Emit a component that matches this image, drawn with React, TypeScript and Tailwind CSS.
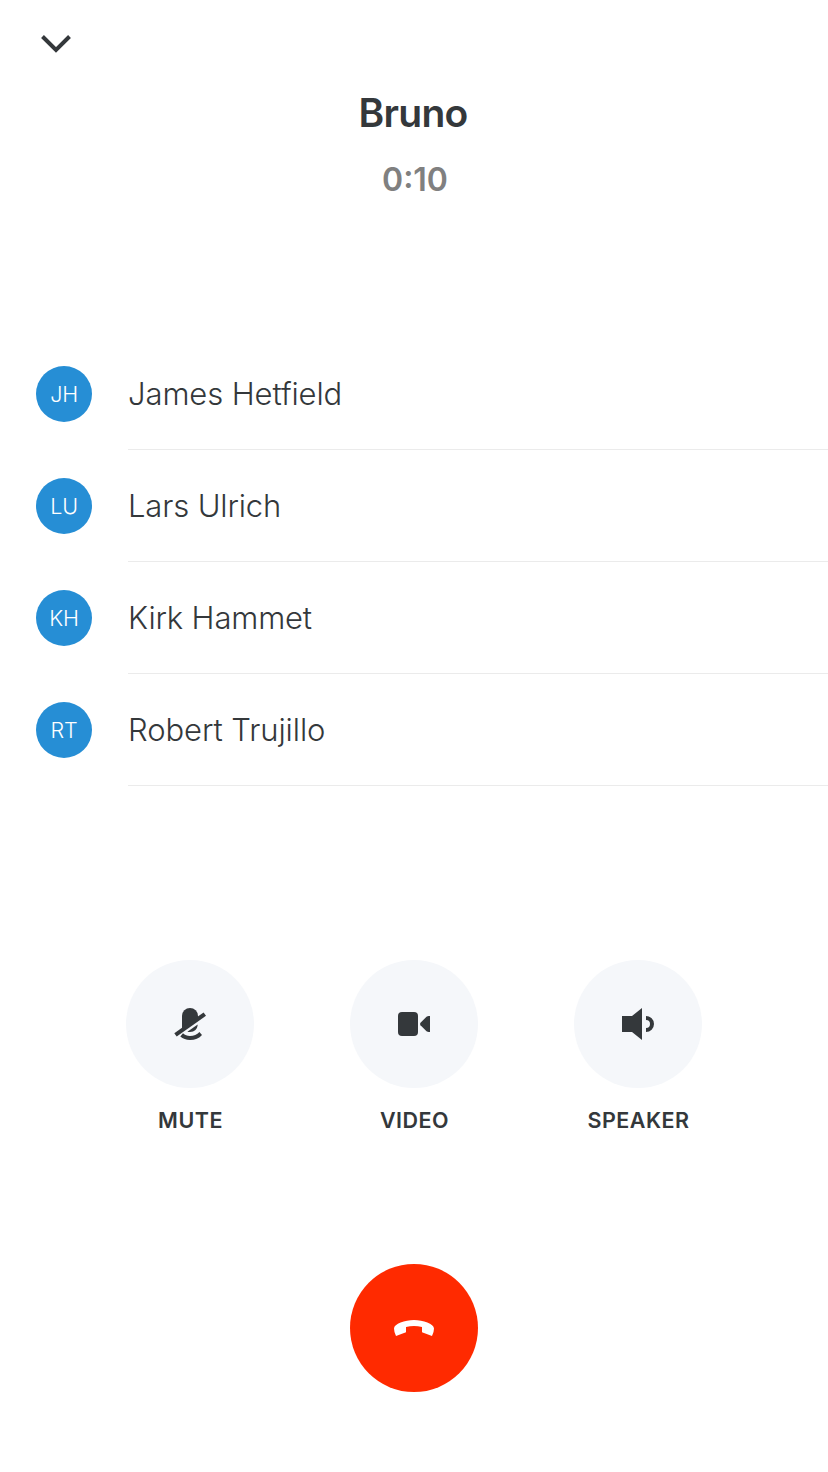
import type { ReactNode } from "react";

const people = [
  { initials: "JH", name: "James Hetfield", tracking: "tracking-[-0.1px]" },
  { initials: "LU", name: "Lars Ulrich", tracking: "tracking-[-0.15px]" },
  { initials: "KH", name: "Kirk Hammet", tracking: "tracking-[-0.15px]" },
  { initials: "RT", name: "Robert Trujillo", tracking: "tracking-[-0.08px]" },
];

function MuteIcon() {
  return (
    <svg width="60" height="48" viewBox="0 0 60 48" fill="#34383b">
      <path d="M22 29V16a8 8 0 0 1 16 0v2.500L23 29Z" />
      <path d="M14.3 33.2 43.6 12.4 46 15.800 16.700 36.500Z" />
      <path d="M27.4 31.7 37.7 24.5C37.6 29 34.4 32 30 32c-1 0-1.9-.1-2.6-.3Z" />
      <path d="M23 33.300c2 1.800 4 2.700 7 2.700 3.800 0 7-1.300 9.400-3.900l2.600 2.800C39.200 38.300 35 40 30 40c-3.900 0-7-1.200-9.700-3.400Z" />
    </svg>
  );
}

function VideoIcon() {
  return (
    <svg width="60" height="48" viewBox="0 0 60 48" fill="#34383b">
      <rect x="14" y="12" width="20" height="24" rx="4" />
      <path d="M36.500 22.800 42.500 16.800C43.200 16.200 44 16 44.800 16H46V32H44.800C44 32 43.200 31.800 42.500 31.200L36.500 25.200Q35.500 24 36.500 22.800Z" />
    </svg>
  );
}

function SpeakerIcon() {
  return (
    <svg width="60" height="48" viewBox="0 0 60 48" fill="#34383b">
      <path d="M14 16H24L34 8V40L24 32H14Z" />
      <path d="M38 16a8 8 0 0 1 0 16v-4a4 4 0 0 0 0-8Z" />
    </svg>
  );
}

function Action({ label, children }: { label: string; children: ReactNode }) {
  return (
    <button className="flex w-32 flex-col items-center">
      <span className="flex size-32 items-center justify-center rounded-full bg-[#f5f7fa]">{children}</span>
      <span className="mt-[18px] pl-px text-[21.5px] leading-7 font-semibold tracking-[0.5px] whitespace-nowrap">{label}</span>
    </button>
  );
}

export default function App() {
  return (
    <main className="flex h-[1472px] w-[828px] flex-col overflow-hidden bg-white font-['Inter',sans-serif] text-[#34383b] antialiased">
      <header className="flex h-[338px] flex-col">
        <button className="mt-[34px] ml-10 h-5 w-8" aria-label="Minimize call">
          <svg width="32" height="20" viewBox="0 0 32 20" fill="none" stroke="#34383b" strokeWidth="4">
            <path d="M2.500 2.500 16 16 29.500 2.500" />
          </svg>
        </button>
        <h1 className="mt-[35px] pr-[2px] text-center text-[39px] leading-12 font-semibold tracking-[-0.7px]">Bruno</h1>
        <p className="mt-[23px] pl-0.5 text-center text-[32px] leading-10 font-semibold text-[#808080]">0:10</p>
      </header>

      <ul>
        {people.map((person) => (
          <li key={person.initials} className="flex h-28 items-center pl-9">
            <span className="flex size-14 items-center justify-center rounded-full bg-[#268ed5] text-[21.5px] font-light tracking-[-0.2px] text-white">
              {person.initials}
            </span>
            <span className={`ml-9 flex h-28 flex-1 items-center border-b border-[#ebebeb] pt-0.5 text-[31px] font-light ${person.tracking}`}>
              {person.name}
            </span>
          </li>
        ))}
      </ul>

      <section className="mt-[174px] flex justify-center gap-24">
        <Action label="MUTE"><MuteIcon /></Action>
        <Action label="VIDEO"><VideoIcon /></Action>
        <Action label="SPEAKER"><SpeakerIcon /></Action>
      </section>

      <button className="mt-[130px] flex size-32 shrink-0 items-center justify-center self-center rounded-full bg-[#ff2a00]" aria-label="End call">
        <svg width="40" height="16" viewBox="0 0 40 16" fill="white">
          <path d="M2 16 12 12.300V7Q20 5 28 7V12.300L38 16Q40 12 40 8.500C40 4 29 0 20 0S0 4 0 8.500Q0 12 2 16Z" />
        </svg>
      </button>
    </main>
  );
}
